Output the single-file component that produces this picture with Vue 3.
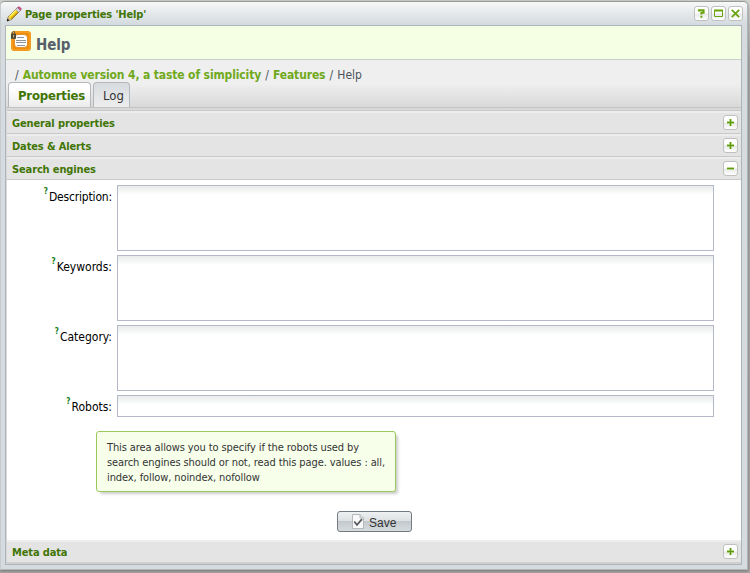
<script setup>
import { ref } from 'vue'
const above = [
  { title: 'General properties', open: false },
  { title: 'Dates & Alerts', open: false },
  { title: 'Search engines', open: true },
]
const fields = ref([
  { label: 'Description:', value: '', tall: true, cls: 'tight' },
  { label: 'Keywords:', value: '', tall: true, cls: '' },
  { label: 'Category:', value: '', tall: true, cls: '' },
  { label: 'Robots:', value: '', tall: false, cls: '' },
])
</script>

<template>
  <div class="desktop">
    <div class="window">
      <header class="titlebar">
        <svg class="pencil" width="16" height="16" viewBox="0 0 16 16">
          <path d="M1 15 L2.4 10.6 L10.5 2.5 L13.5 5.5 L5.4 13.6 Z" fill="#f4d81c" stroke="#4a3c10" stroke-width=".6" />
          <path d="M3.4 10.6 L10.6 3.4" stroke="#fff58a" stroke-width="1.2" />
          <path d="M5.3 12.7 L12.6 5.4" stroke="#c98f0c" stroke-width="1.2" />
          <path d="M9.6 3.4 L11.6 1.4 L14.6 4.4 L12.6 6.4 Z" fill="#d9d9e8" stroke="#777" stroke-width=".5" />
          <path d="M11.4 1.6 Q12.7 .2 14 1.2 L15 2.2 Q15.7 3.3 14.4 4.6 Z" fill="#d8558e" stroke="#8b3b60" stroke-width=".5" />
          <path d="M2.4 10.8 L5.2 13.6 L1 15 Z" fill="#d9b78d" />
          <path d="M.8 15.2 L1.6 12.6 L3.4 14.4 Z" fill="#111" />
        </svg>
        <span class="title">Page properties 'Help'</span>
        <span class="tools">
          <i class="tool"><svg width="13" height="13" viewBox="0 0 13 13"><path d="M3.9 4.6V3.2H8.6V5.8H6.4V7.6M6.4 8.8V10.8" fill="none" stroke="#68a40c" stroke-width="2" /></svg></i>
          <i class="tool"><svg width="13" height="13" viewBox="0 0 13 13"><path d="M2.5 3.5H10.5V9.5H2.5Z" fill="none" stroke="#68a40c" /><path d="M2 3.5H11" stroke="#68a40c" stroke-width="2" /></svg></i>
          <i class="tool"><svg width="13" height="13" viewBox="0 0 13 13"><path d="M2.8 2.8L10.2 10.2M10.2 2.8L2.8 10.2" fill="none" stroke="#68a40c" stroke-width="1.7" /></svg></i>
        </span>
      </header>

      <main class="body">
        <div class="heading">
          <svg class="page-icon" width="21" height="21" viewBox="0 0 21 21">
            <rect x="0" y="0" width="20" height="20" rx="3.5" fill="#ef8c08" />
            <rect x="1" y="1" width="18" height="18" rx="3" fill="none" stroke="#f9ab38" />
            <rect x="3.5" y="3.5" width="13" height="13" rx="3.5" fill="#fff" stroke="#d97a06" stroke-width=".7" />
            <path d="M6 6.5H13M5 9.5H15M5 11.5H15M6 14.5H14" stroke="#8e9299" />
            <path d="M1.3 3V1.8Q1.3 .6 2.5 .6Q3.7 .6 3.7 1.8V3" fill="none" stroke="#555" />
            <rect x="0" y="2.8" width="5" height="5" fill="#4a4638" />
            <rect x="2" y="4" width="1.2" height="2.4" fill="#c4b071" />
          </svg>
          <h1>Help</h1>
        </div>

        <div class="toolbar">
          <nav class="crumbs">/ <b>Automne version 4, a taste of simplicity</b> / <b>Features</b> / Help</nav>
          <div class="tabs">
            <div class="tab active">Properties</div>
            <div class="tab">Log</div>
          </div>
        </div>
        <div class="strip"></div>

        <div class="accordion">
          <div v-for="s in above" :key="s.title" class="section">
            <span>{{ s.title }}</span>
            <i class="tool"><svg width="13" height="13" viewBox="0 0 13 13">
              <path :d="s.open ? 'M3 6.5H10' : 'M3 6.5H10M6.5 3V10'" stroke="#9bc860" stroke-width="2.4" />
              <path :d="s.open ? 'M3 6.5H10' : 'M3 6.5H10M6.5 3V10'" stroke="#5f980c" />
            </svg></i>
          </div>

          <form class="content" @submit.prevent>
            <div v-for="f in fields" :key="f.label" class="field">
              <label><sup>?</sup><span :class="f.cls">{{ f.label }}</span></label>
              <textarea v-if="f.tall" v-model="f.value" class="input tall"></textarea>
              <input v-else v-model="f.value" class="input" type="text">
            </div>
            <div class="tip">
              <div>This area allows you to specify if the robots used by</div>
              <div>search engines should or not, read this page. values : all,</div>
              <div>index, follow, noindex, nofollow</div>
            </div>
            <button class="save" type="submit">
              <svg width="14" height="16" viewBox="0 0 14 16">
                <path d="M1.5 .5H9L12.5 4V14.5H1.5Z" fill="#f8f8f8" stroke="#b5b9bc" />
                <path d="M9 .5V4H12.5" fill="#ddd" stroke="#b5b9bc" />
                <path d="M3.2 7.5L6 10.8L11 5.2" fill="none" stroke="#565c61" stroke-width="1.8" />
              </svg>
              <span>Save</span>
            </button>
          </form>

          <div class="section last">
            <span>Meta data</span>
            <i class="tool"><svg width="13" height="13" viewBox="0 0 13 13">
              <path d="M3 6.5H10M6.5 3V10" stroke="#9bc860" stroke-width="2.4" />
              <path d="M3 6.5H10M6.5 3V10" stroke="#5f980c" />
            </svg></i>
          </div>
        </div>
      </main>
    </div>
  </div>
</template>

<style>
body { overflow: hidden; }
</style>

<style scoped>
* { box-sizing: border-box; }
.desktop {
  width: 750px; height: 573px; padding-top: 1px; overflow: hidden;
  background: linear-gradient(#d3d3d0 0 4px, #a5a5a5 60px, #a9a3a3 100%);
  font-family: Tahoma, "DejaVu Sans Condensed", "DejaVu Sans", sans-serif;
  white-space: nowrap;
}
.window {
  width: 748px; height: 569px; border: 1px solid #b0b5b8; border-top-color: #999;
  border-left-color: #c6cbcd; border-radius: 5px 5px 0 0; background: #d5dbdf;
  padding: 0 5px 5px 4px; box-shadow: 0 1px 3px #777;
}
.titlebar {
  height: 23px; margin: 0 -5px 0 -4px; padding: 0 4px 0 5px; display: flex; align-items: center;
  border-radius: 4px 4px 0 0; background: linear-gradient(#f7f8f8, #e8ebed 40%, #d3dade);
}
.pencil { margin-top: 1px; }
.title { margin-left: 3px; padding-top: 1px; font-size: 11px; letter-spacing: -.13px; font-weight: bold; color: #417505; }
.tools { display: flex; gap: 2px; margin-left: auto; }
.tool {
  width: 15px; height: 15px; border: 1px solid #bfc1c1; border-radius: 3px; display: block;
  background: linear-gradient(#fff 45%, #e9e9e9 55%, #fff);
}
.tool svg { display: block; }
.body { height: 540px; border: 1px solid #abb5ba; display: flex; flex-direction: column; background: #d8d8d8; }
.heading { height: 34px; background: #f4ffe4; border-bottom: 1px solid #c9cfcb; padding-left: 5px; display: flex; }
.page-icon { margin-top: 5px; }
h1 { margin: 9px 0 0 4px; font-size: 15px; line-height: 20px; letter-spacing: -.1px; color: #57606a; }
.toolbar { height: 48px; background: linear-gradient(#efefef 50%, #d9d9d9); border-bottom: 1px solid #c3c3c3; }
.crumbs { height: 22px; padding: 7px 0 0 9px; font-size: 12px; line-height: 16px; color: #4b535b; word-spacing: .7px; }
.crumbs b { color: #70a91b; letter-spacing: -.13px; word-spacing: 0; }
.tabs { display: flex; gap: 2px; padding-left: 2px; }
.tab {
  width: 37px; height: 25px; line-height: 26px; padding-left: 9px; font-size: 13px; color: #333;
  border: 1px solid #b2b8bb; border-bottom: 0; border-radius: 4px 4px 0 0;
  background: linear-gradient(#d7dbde, #eeeeef);
}
.tab.active { width: 83px; font-size: 13px; letter-spacing: -.2px; line-height: 25px; font-weight: bold; color: #417505; background: linear-gradient(#fff, #fff 25%, #ebebeb); }
.strip { height: 2px; background: #d9d9d9; }
.accordion { margin-left: 1px; flex: 1; display: flex; flex-direction: column; border-top: 1px solid #c8c8c8; background: #fff; }
.section {
  height: 23px; flex: none; padding: 0 3px 0 5px; display: flex; align-items: center; justify-content: space-between;
  background: #e4e4e4; border-top: 2px solid #ededed; border-bottom: 1px solid #c9c9c9;
  font-size: 11px; letter-spacing: -.13px; font-weight: bold; color: #417505;
}
.section .tool { margin-bottom: 2px; }
.content { height: 360px; padding: 5px 0 0; margin: 0; }
.field { display: flex; margin-bottom: 4px; font-size: 12px; color: #000; }
label { width: 105px; padding-top: 5px; line-height: 14px; display: flex; justify-content: flex-end; }
label .tight { letter-spacing: -.17px; }
label sup { font-size: 8px; line-height: 8px; margin: -2px 1px 0 0; color: #16801a; font-weight: bold; }
.input {
  display: block; width: 597px; height: 22px; margin: 0 0 0 5px; padding: 2px; resize: none; outline: 0;
  border: 1px solid #b5b8c8; border-radius: 0; background: linear-gradient(#e8eceb, #fff 9px);
}
.tall { height: 66px; }
.tip {
  width: 300px; height: 61px; margin: 14px 0 0 89px; padding: 8px 10px; border: 1px solid #9bc95b;
  border-radius: 3px; background: #f7ffeb; box-shadow: 3px 3px 3px -1px #ccc; font-size: 11px; letter-spacing: -.1px; line-height: 15px; color: #333;
}
.save {
  width: 75px; height: 21px; margin: 19px 0 0 330px; padding: 0 0 0 13px; display: flex; align-items: center; gap: 4px;
  border: 1px solid #737b80; border-radius: 3px; background: linear-gradient(#eef0f1, #dce0e2 50%, #c3cace 50%, #d5dadd);
  font: 12px "Liberation Sans", Arial, sans-serif; color: #333;
}
.save span { padding-top: 2px; }
.last { border-bottom: 2px solid #cfcfcf; height: 24px; }
</style>
